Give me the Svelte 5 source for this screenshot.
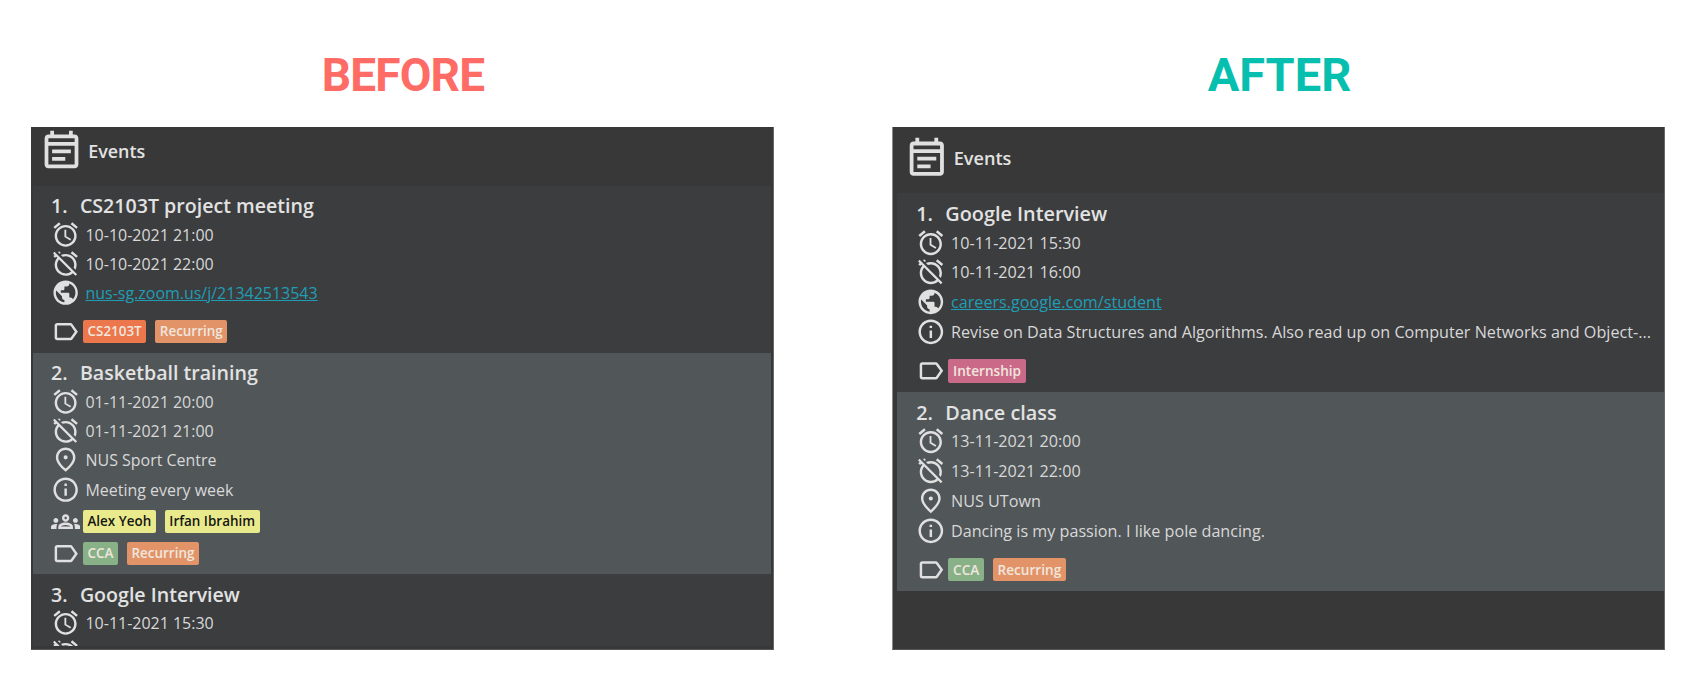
<script>
  const icons = {
    calendar: 'M19 4h-1V2h-2v2H8V2H6v2H5c-1.11 0-1.99.9-1.99 2L3 20c0 1.1.89 2 2 2h14c1.1 0 2-.9 2-2V6c0-1.1-.9-2-2-2zm0 16H5V10h14v10zm0-12H5V6h14v2zM7 12h10v2H7zm0 4h7v2H7z',
    start: 'M22 5.72l-4.6-3.86-1.29 1.53 4.6 3.86L22 5.72zM7.88 3.39L6.6 1.86 2 5.71l1.29 1.53 4.59-3.85zM12.5 8H11v6l4.75 2.85.75-1.23-4-2.37V8zM12 4c-4.97 0-9 4.03-9 9s4.02 9 9 9c4.97 0 9-4.03 9-9s-4.03-9-9-9zm0 16c-3.87 0-7-3.13-7-7s3.13-7 7-7 7 3.13 7 7-3.13 7-7 7z',
    end: 'M12 6c3.87 0 7 3.13 7 7 0 .84-.16 1.65-.43 2.4l1.52 1.52c.58-1.19.91-2.51.91-3.92 0-4.97-4.03-9-9-9-1.41 0-2.73.33-3.92.91L9.6 6.43C10.35 6.16 11.16 6 12 6zm10-.28l-4.6-3.86-1.29 1.53 4.6 3.86L22 5.72zM2.92 2.29L1.65 3.57 2.98 4.9l-1.11.93 1.42 1.42 1.11-.94.8.8C3.83 8.69 3 10.75 3 13c0 4.97 4.02 9 9 9 2.25 0 4.31-.83 5.89-2.2l2.2 2.2 1.27-1.27L3.89 3.27l-.97-.98zm13.55 16.1C15.26 19.39 13.7 20 12 20c-3.87 0-7-3.13-7-7 0-1.7.61-3.26 1.61-4.47l9.86 9.86zM8.02 3.28L6.6 1.86l-.86.71 1.42 1.42.86-.71z',
    link: 'M12 2C6.48 2 2 6.48 2 12s4.48 10 10 10 10-4.48 10-10S17.52 2 12 2zm-1 17.93c-3.95-.49-7-3.85-7-7.93 0-.62.08-1.21.21-1.79L9 15v1c0 1.1.9 2 2 2v1.93zm6.9-2.54c-.26-.81-1-1.39-1.9-1.39h-1v-3c0-.55-.45-1-1-1H8v-2h2c.55 0 1-.45 1-1V7h2c1.1 0 2-.9 2-2v-.41c2.93 1.19 5 4.06 5 7.41 0 2.08-.8 3.97-2.1 5.39z',
    place: 'M12 2C7.8 2 4 5.22 4 10.2c0 3.32 2.67 7.25 8 11.8 5.33-4.55 8-8.48 8-11.8C20 5.22 16.2 2 12 2zm0 17.34C8.1 15.99 6 12.77 6 10.2 6 6.57 8.65 4 12 4s6 2.57 6 6.2c0 2.57-2.1 5.79-6 9.14zM12 8.4a1.7 1.7 0 1 0 0 3.4 1.7 1.7 0 1 0 0-3.4z',
    info: 'M11 7h2v2h-2zm0 4h2v6h-2zm1-9C6.48 2 2 6.48 2 12s4.48 10 10 10 10-4.48 10-10S17.52 2 12 2zm0 18c-4.41 0-8-3.59-8-8s3.59-8 8-8 8 3.59 8 8-3.59 8-8 8z',
    people: 'M4 13c1.1 0 2-.9 2-2s-.9-2-2-2-2 .9-2 2 .9 2 2 2zm1.13 1.1c-.37-.06-.74-.1-1.13-.1-.99 0-1.93.21-2.78.58C.48 14.9 0 15.62 0 16.43V18h4.5v-1.61c0-.83.23-1.61.63-2.29zM20 13c1.1 0 2-.9 2-2s-.9-2-2-2-2 .9-2 2 .9 2 2 2zm4 3.43c0-.81-.48-1.53-1.22-1.85-.85-.37-1.79-.58-2.78-.58-.39 0-.76.04-1.13.1.4.68.63 1.46.63 2.29V18H24v-1.57zM16.24 13.65c-1.17-.52-2.61-.9-4.24-.9s-3.07.39-4.24.9C6.68 14.13 6 15.21 6 16.39V18h12v-1.61c0-1.18-.68-2.26-1.76-2.74zM8.07 16c.09-.23.13-.39.91-.69.97-.38 1.99-.56 3.02-.56s2.05.18 3.02.56c.77.3.81.46.91.69H8.07zM12 8c.55 0 1 .45 1 1s-.45 1-1 1-1-.45-1-1 .45-1 1-1m0-2c-1.66 0-3 1.34-3 3s1.34 3 3 3 3-1.34 3-3-1.34-3-3-3z',
    tag: 'M17.63 5.84C17.27 5.33 16.67 5 16 5L5 5.01C3.9 5.01 3 5.9 3 7v10c0 1.1.9 1.99 2 1.99L16 19c.67 0 1.27-.33 1.63-.84L22 12l-4.37-6.16zM16 17H5V7h11l3.55 5L16 17z'
  };

  const recurring = { text: 'Recurring', tone: 'orange' };
  const panels = [
    {
      id: 'before',
      heading: 'BEFORE',
      events: [
        {
          title: 'CS2103T project meeting',
          details: [['start', '10-10-2021 21:00'], ['end', '10-10-2021 22:00'], ['link', 'nus-sg.zoom.us/j/21342513543']],
          tags: [{ text: 'CS2103T', tone: 'coral' }, recurring]
        },
        {
          title: 'Basketball training',
          details: [['start', '01-11-2021 20:00'], ['end', '01-11-2021 21:00'], ['place', 'NUS Sport Centre'], ['info', 'Meeting every week']],
          people: [{ text: 'Alex Yeoh', tone: 'yellow' }, { text: 'Irfan Ibrahim', tone: 'yellow' }],
          tags: [{ text: 'CCA', tone: 'green' }, recurring]
        },
        {
          title: 'Google Interview',
          details: [['start', '10-11-2021 15:30'], ['end', '']]
        }
      ]
    },
    {
      id: 'after',
      heading: 'AFTER',
      events: [
        {
          title: 'Google Interview',
          details: [
            ['start', '10-11-2021 15:30'],
            ['end', '10-11-2021 16:00'],
            ['link', 'careers.google.com/student'],
            ['info', 'Revise on Data Structures and Algorithms. Also read up on Computer Networks and Object-...']
          ],
          tags: [{ text: 'Internship', tone: 'pink' }]
        },
        {
          title: 'Dance class',
          details: [['start', '13-11-2021 20:00'], ['end', '13-11-2021 22:00'], ['place', 'NUS UTown'], ['info', 'Dancing is my passion. I like pole dancing.']],
          tags: [{ text: 'CCA', tone: 'green' }, recurring]
        }
      ]
    }
  ];
</script>

{#snippet icon(name)}
  <svg class="icon" viewBox="0 0 24 24" aria-hidden="true"><path d={icons[name]} /></svg>
{/snippet}

{#snippet chips(name, items)}
  <div class="chips {name}">
    {@render icon(name)}
    {#each items as item}
      <span class="chip {item.tone}">{item.text}</span>
    {/each}
  </div>
{/snippet}

<main>
  {#each panels as panel}
    <section class={panel.id}>
      <h1>{panel.heading}</h1>
      <div class="panel">
        <header>
          {@render icon('calendar')}
          <h2>Events</h2>
        </header>
        <div class="list">
          {#each panel.events as event, i}
            <article>
              <h3><span class="num">{i + 1}.</span>{event.title}</h3>
              {#each event.details as [kind, text]}
                <div class="row">
                  {@render icon(kind)}
                  <span class="text" class:link={kind === 'link'}>{text}</span>
                </div>
              {/each}
              {#if event.people || event.tags}
                <div class="groups" class:spaced={!event.people}>
                  {#if event.people}{@render chips('people', event.people)}{/if}
                  {#if event.tags}{@render chips('tag', event.tags)}{/if}
                </div>
              {/if}
            </article>
          {/each}
        </div>
      </div>
    </section>
  {/each}
</main>

<style>
  :global(body) {
    margin: 0;
    background: #fff;
  }

  main {
    box-sizing: border-box;
    width: 1696px;
    height: 673px;
    padding: 47px 31px 23px;
    display: flex;
    justify-content: space-between;
    overflow: hidden;
    font-family: 'Open Sans', 'Noto Sans', sans-serif;
  }

  section {
    display: flex;
    flex-direction: column;
  }

  .before {
    --u: 1px;
    width: 743px;
  }

  .after {
    --u: 1.0125px;
    width: 773px;
  }

  h1 {
    box-sizing: border-box;
    margin: 0;
    height: 80px;
    padding-top: 1px;
    font: 700 46px/54px Roboto, sans-serif;
    text-align: center;
  }

  .before h1 {
    padding-left: 1px;
    letter-spacing: -0.8px;
    color: #ff6c66;
  }

  .after h1 {
    padding-left: 2px;
    font-size: 47px;
    line-height: 53px;
    color: #07bfae;
  }

  .panel {
    flex: 1;
    min-height: 0;
    box-sizing: border-box;
    display: flex;
    flex-direction: column;
    overflow: hidden;
    background: #383838;
    border-right: 1px solid #686868;
    border-bottom: 1px solid #565656;
  }

  .before .panel {
    padding: 0 2px 3px 2px;
  }

  .after .panel {
    border-left: 1px solid #8a8a8a;
    padding-left: 4px;
  }

  header {
    display: flex;
    align-items: center;
    flex: none;
    box-sizing: border-box;
  }

  .before header {
    height: 58.5px;
    padding: 0 0 14px 5.6px;
  }

  .after header {
    height: 66px;
    padding: 0 0 7.4px 6.5px;
  }

  header .icon {
    width: calc(45 * var(--u));
    height: calc(45 * var(--u));
  }

  h2 {
    margin: 3px 0 0 calc(4.6 * var(--u));
    font-size: calc(17.9 * var(--u));
    line-height: 24px;
    font-weight: 600;
    color: #e2e2e2;
  }

  .icon {
    flex: none;
    display: block;
    width: calc(29.3 * var(--u));
    height: calc(29.3 * var(--u));
    fill: #e0e0e0;
  }

  .list {
    flex: 0 1 auto;
    min-height: 0;
    overflow: hidden;
  }

  article {
    padding: calc(6.8 * var(--u)) 0 calc(4.7 * var(--u)) calc(18.1 * var(--u));
    background: #3c3d3f;
  }

  .after article {
    padding-left: 19.2px;
  }

  article:nth-child(even) {
    background: #515658;
  }

  h3 {
    margin: 0;
    height: calc(27.4 * var(--u));
    display: flex;
    font-size: calc(19.6 * var(--u));
    line-height: calc(27.4 * var(--u));
    font-weight: 600;
    color: #e2e2e2;
    white-space: nowrap;
  }

  .num {
    width: calc(28.8 * var(--u));
  }

  .row {
    display: flex;
    align-items: center;
    height: calc(29.35 * var(--u));
  }

  .text {
    margin-left: calc(5.1 * var(--u));
    padding-top: calc(0.6 * var(--u));
    font-size: calc(15.98 * var(--u));
    line-height: calc(24 * var(--u));
    color: #d8d8d8;
    white-space: nowrap;
  }

  .link {
    color: #209db5;
    text-decoration: underline;
  }

  .groups {
    padding-top: calc(1.2 * var(--u));
  }

  .groups.spaced {
    padding-top: calc(8.2 * var(--u));
  }

  .chips {
    display: flex;
    align-items: center;
    height: calc(32 * var(--u));
  }

  .chip {
    box-sizing: border-box;
    height: calc(23 * var(--u));
    margin: 0 calc(6.5 * var(--u)) 0 calc(2.6 * var(--u));
    padding: 0 calc(4.5 * var(--u));
    border-radius: 2px;
    font-size: calc(13.45 * var(--u));
    line-height: calc(23 * var(--u));
    font-weight: 600;
    color: #f0e6de;
    white-space: nowrap;
  }

  .coral { background: #ec774d; }
  .orange { background: #e29468; }
  .green { background: #88b188; }
  .pink { background: #cb6989; }
  .yellow { background: #e9ea8b; color: #161616; }
</style>
